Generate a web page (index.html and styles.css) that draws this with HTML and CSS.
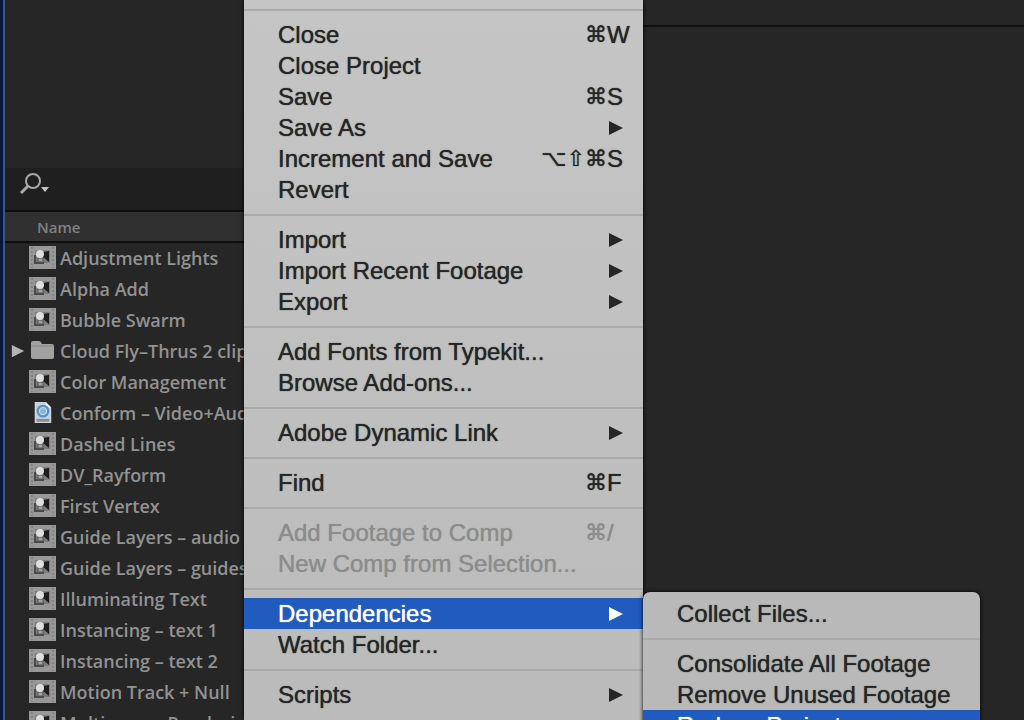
FILE: index.html
```html
<!DOCTYPE html>
<html lang="en">
<head>
    <meta charset="UTF-8">
    <meta name="viewport" content="width=device-width, initial-scale=1.0">
    <title>Project</title>
    <link rel="stylesheet" href="styles.css">
</head>
<body>
    <svg class="symbols" aria-hidden="true">
        <symbol id="comp" viewBox="0 0 27 23">
            <rect width="27" height="23" fill="#989898"/>
            <path d="M3 1v21M24 1v21" stroke="#848484" stroke-width="2" stroke-dasharray="2 2"/>
            <rect x="6" y="4" width="15" height="13" fill="#7c7c7c"/>
            <path d="M6 9v8h9" fill="none" stroke="#4a4a4a" stroke-width="2"/>
            <path d="M14 6l6-1v11l-6-5z" fill="#1e1e1e"/>
            <rect x="9" y="12" width="5" height="4" fill="#a2a2a2" stroke="#555"/>
            <circle cx="11" cy="8" r="4" fill="#dedede"/>
        </symbol>
        <symbol id="folder" viewBox="0 0 27 23">
            <path d="M2 4q0-2 2-2h6q2 0 3 3h10q2 0 2 2v11q0 2-2 2H4q-2 0-2-2z" fill="#a2a2a2"/>
            <path d="M2 7h23" stroke="#8a8a8a"/>
        </symbol>
        <symbol id="file" viewBox="0 0 27 25">
            <path d="M5 1h12l6 6v17H5z" fill="#c9d3dd"/>
            <path d="M17 1v6h6z" fill="#eef2f6"/>
            <circle cx="14" cy="11" r="7" fill="#5b8fc6"/>
            <circle cx="14" cy="11" r="4" fill="#8db6de" stroke="#d5e4f2"/>
            <path d="M7 21h14" stroke="#8d8d8d" stroke-width="3"/>
        </symbol>
        <symbol id="arrow" viewBox="0 0 14 16">
            <path d="M0 1l14 7-14 7z" fill="currentColor"/>
        </symbol>
    </svg>

    <div class="app">
        <section class="project">
            <div class="preview"></div>
            <div class="search">
                <label for="search">
                    <svg width="32" height="24" viewBox="0 0 32 24" role="img" aria-label="Search">
                        <circle cx="14" cy="9" r="7" fill="none" stroke="#a8a8a8" stroke-width="2"/>
                        <path d="M9 14l-7 7" stroke="#a8a8a8" stroke-width="3"/>
                        <path d="M22 15h8l-4 5z" fill="#c4c4c4"/>
                    </svg>
                </label>
                <input id="search" type="text">
            </div>
            <table class="items">
                <thead>
                    <tr><th>Name</th></tr>
                </thead>
                <tbody>
                    <tr><td><div class="item"><svg class="icon"><use href="#comp"/></svg>Adjustment Lights</div></td></tr>
                    <tr><td><div class="item"><svg class="icon"><use href="#comp"/></svg>Alpha Add</div></td></tr>
                    <tr><td><div class="item"><svg class="icon"><use href="#comp"/></svg>Bubble Swarm</div></td></tr>
                    <tr><td><div class="item folder"><svg class="twirl"><use href="#arrow"/></svg><svg class="icon"><use href="#folder"/></svg>Cloud Fly–Thrus 2 clips</div></td></tr>
                    <tr><td><div class="item"><svg class="icon"><use href="#comp"/></svg>Color Management</div></td></tr>
                    <tr><td><div class="item"><svg class="icon"><use href="#file"/></svg>Conform – Video+Audio</div></td></tr>
                    <tr><td><div class="item"><svg class="icon"><use href="#comp"/></svg>Dashed Lines</div></td></tr>
                    <tr><td><div class="item"><svg class="icon"><use href="#comp"/></svg>DV_Rayform</div></td></tr>
                    <tr><td><div class="item"><svg class="icon"><use href="#comp"/></svg>First Vertex</div></td></tr>
                    <tr><td><div class="item"><svg class="icon"><use href="#comp"/></svg>Guide Layers – audio</div></td></tr>
                    <tr><td><div class="item"><svg class="icon"><use href="#comp"/></svg>Guide Layers – guides</div></td></tr>
                    <tr><td><div class="item"><svg class="icon"><use href="#comp"/></svg>Illuminating Text</div></td></tr>
                    <tr><td><div class="item"><svg class="icon"><use href="#comp"/></svg>Instancing – text 1</div></td></tr>
                    <tr><td><div class="item"><svg class="icon"><use href="#comp"/></svg>Instancing – text 2</div></td></tr>
                    <tr><td><div class="item"><svg class="icon"><use href="#comp"/></svg>Motion Track + Null</div></td></tr>
                    <tr><td><div class="item"><svg class="icon"><use href="#comp"/></svg>Multiscreen Rendering</div></td></tr>
                </tbody>
            </table>
        </section>

        <main class="viewer">
            <div class="tabs"></div>
        </main>

        <ul class="menu file-menu">
            <li class="separator"></li>
            <li><button>Close <span class="mods">⌘</span><span class="key">W</span></button></li>
            <li><button>Close Project</button></li>
            <li><button>Save <span class="mods">⌘</span><span class="key">S</span></button></li>
            <li><button>Save As <svg class="arrow"><use href="#arrow"/></svg></button></li>
            <li><button>Increment and Save <span class="mods">⌥⇧⌘</span><span class="key">S</span></button></li>
            <li><button>Revert</button></li>
            <li class="separator"></li>
            <li><button>Import <svg class="arrow"><use href="#arrow"/></svg></button></li>
            <li><button>Import Recent Footage <svg class="arrow"><use href="#arrow"/></svg></button></li>
            <li><button>Export <svg class="arrow"><use href="#arrow"/></svg></button></li>
            <li class="separator"></li>
            <li><button>Add Fonts from Typekit...</button></li>
            <li><button>Browse Add-ons...</button></li>
            <li class="separator"></li>
            <li><button>Adobe Dynamic Link <svg class="arrow"><use href="#arrow"/></svg></button></li>
            <li class="separator"></li>
            <li><button>Find <span class="mods">⌘</span><span class="key">F</span></button></li>
            <li class="separator"></li>
            <li><button disabled>Add Footage to Comp <span class="mods">⌘</span><span class="key">/</span></button></li>
            <li><button disabled>New Comp from Selection...</button></li>
            <li class="separator"></li>
            <li class="open">
                <button class="active">Dependencies <svg class="arrow"><use href="#arrow"/></svg></button>
                <ul class="menu submenu">
                    <li><button>Collect Files...</button></li>
                    <li class="separator"></li>
                    <li><button>Consolidate All Footage</button></li>
                    <li><button>Remove Unused Footage</button></li>
                    <li><button class="active">Reduce Project</button></li>
                </ul>
            </li>
            <li><button>Watch Folder...</button></li>
            <li class="separator"></li>
            <li><button>Scripts <svg class="arrow"><use href="#arrow"/></svg></button></li>
        </ul>
    </div>
</body>
</html>
```

FILE: styles.css
```css
* {
    margin: 0;
    padding: 0;
    box-sizing: border-box;
}

body {
    background-color: #262626;
    font-family: "Liberation Sans", Arial, sans-serif;
    overflow: hidden;
}

.symbols {
    display: none;
}

.app {
    position: relative;
    display: flex;
    height: 100vh;
    overflow: hidden;
}

/* project panel */
.project {
    flex: 0 0 40%;
    border-left: 3px solid #07183c;
    box-shadow: inset 2px 0 #3c5878;
    padding-left: 2px;
    font-family: "Open Sans", "Noto Sans", sans-serif;
    color: #929292;
}

.preview {
    height: 168px;
}

.search {
    display: flex;
    align-items: center;
    height: 44px;
    padding: 0 14px 10px;
    background-color: #1f1f1f;
    border-bottom: 2px solid #0e0e0e;
}

.search label {
    display: flex;
}

.search input {
    flex: 1;
    background: none;
    border: none;
    outline: none;
    color: #a8a8a8;
    font-size: 16px;
}

.items {
    width: 100%;
    border-collapse: collapse;
}

.items th {
    height: 30px;
    padding-left: 32px;
    background-color: #303030;
    border-bottom: 2px solid #0e0e0e;
    font-size: 15px;
    font-weight: 600;
    line-height: 28px;
    text-align: left;
    color: #808080;
}

.item {
    display: flex;
    align-items: center;
    gap: 4px;
    height: 31px;
    padding: 0 0 2px 24px;
    font-size: 18px;
    font-weight: 600;
    white-space: nowrap;
}

.item.folder {
    padding-left: 6px;
}

.icon {
    width: 27px;
    height: 23px;
}

.twirl {
    width: 14px;
    height: 14px;
    color: #b4b4b4;
}

/* viewer */
.viewer {
    flex: 1;
}

.tabs {
    height: 27px;
    border-bottom: 2px solid #101010;
}

/* menus */
.menu {
    position: absolute;
    list-style: none;
    background: linear-gradient(#c5c5c5, #bbbbbb);
}

.file-menu {
    top: 0;
    left: 244px;
    width: 399px;
    height: 100%;
    box-shadow: 0 0 4px #000;
}

.submenu {
    top: -6px;
    left: 100%;
    width: 337px;
    padding: 6px 0;
    border-radius: 7px;
    background: #b9b9b9;
    box-shadow: 0 0 4px #000;
}

.open {
    position: relative;
}

.menu button {
    display: flex;
    align-items: center;
    width: 100%;
    height: 31px;
    padding: 0 0 0 34px;
    background: none;
    border: none;
    color: #262626;
    font-family: inherit;
    font-size: 24px;
    text-align: left;
    text-shadow: 0 0 1px currentColor;
    white-space: nowrap;
}

.menu button.active {
    background-color: #205bbd;
    color: #fff;
}

.menu button:disabled {
    color: #8c8c8c;
}

.separator {
    height: 19px;
    padding-top: 9px;
}

.separator::after {
    content: "";
    display: block;
    height: 2px;
    background-color: #aaaaaa;
}

.mods {
    margin-left: auto;
    font-family: "DejaVu Sans", sans-serif;
    font-size: 22px;
}

.key {
    width: 36px;
}

.arrow {
    width: 14px;
    height: 16px;
    margin-left: auto;
    margin-right: 20px;
}
```
